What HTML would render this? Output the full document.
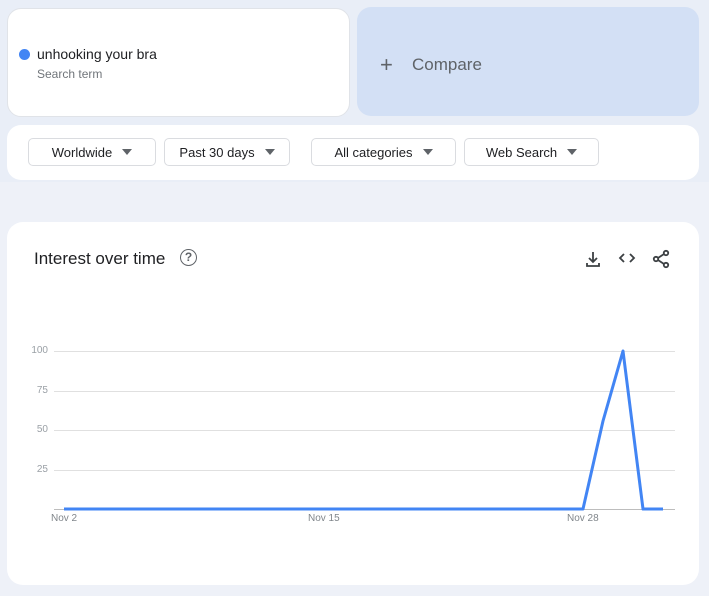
<!DOCTYPE html><html><head><style>
body{margin:0;width:709px;height:596px;background:#eef1f8;font-family:"Liberation Sans",sans-serif;position:relative;overflow:hidden}
.top{position:absolute;left:0;top:0;width:709px;height:182px;background:#e9eef7}
.card{position:absolute;background:#fff;border-radius:14px}
.chip{position:absolute;top:138px;height:28px;border:1px solid #dadce0;border-radius:5px;background:#fff;font-size:13px;color:#202124;line-height:28px;box-sizing:border-box;text-align:center}
.chip:after{content:"";display:inline-block;margin-left:10px;border-left:5px solid transparent;border-right:5px solid transparent;border-top:6px solid #5f6368;vertical-align:2px}
.yl{position:absolute;font-size:10px;color:#9aa0a6;text-align:right;width:30px;left:18px}
.xl{position:absolute;font-size:10px;color:#80868b;top:513px}
</style></head><body>
<div class="top"></div>
<div class="card" style="left:7px;top:8px;width:343px;height:109px;border:1px solid #e0e3e8;box-sizing:border-box"></div>
<div style="position:absolute;left:19px;top:49px;width:11px;height:11px;border-radius:50%;background:#4285f4"></div>
<div style="position:absolute;left:37px;top:46px;font-size:14px;color:#202124">unhooking your bra</div>
<div style="position:absolute;left:37px;top:67px;font-size:12px;color:#70757a">Search term</div>
<div style="position:absolute;left:357px;top:7px;width:342px;height:109px;border-radius:14px;background:#d3e0f5"></div>
<div style="position:absolute;left:380px;top:52px;font-size:22px;color:#5f6368;font-weight:300">+</div>
<div style="position:absolute;left:412px;top:55px;font-size:17px;color:#5f6368">Compare</div>
<div class="card" style="left:7px;top:125px;width:692px;height:55px"></div>
<div class="chip" style="left:28px;width:128px">Worldwide</div>
<div class="chip" style="left:164px;width:126px">Past 30 days</div>
<div class="chip" style="left:311px;width:145px">All categories</div>
<div class="chip" style="left:464px;width:135px">Web Search</div>
<div class="card" style="left:7px;top:222px;width:692px;height:363px;border-radius:16px"></div>
<div style="position:absolute;left:34px;top:249px;font-size:17px;color:#202124">Interest over time</div>
<div style="position:absolute;left:180px;top:249px;width:15px;height:15px;border:1.8px solid #5f6368;border-radius:50%;font-size:12px;line-height:15px;text-align:center;color:#5f6368;font-weight:bold">?</div>
<svg style="position:absolute;left:0;top:0" width="709" height="596">
<g stroke="#3c4043" stroke-width="1.8" fill="none">
<path d="M593 252v10M589 258l4 4 4-4M587 263v3h12v-3"/>
<path d="M624 254l-4 4 4 4M630 254l4 4-4 4"/>
<circle cx="666" cy="253" r="2.2"/><circle cx="656" cy="259" r="2.2"/><circle cx="666" cy="265" r="2.2"/>
<path d="M658 258l6-4M658 260l6 4"/>
</g>
<g stroke="#e0e0e0" stroke-width="1">
<path d="M54 351.5H675M54 391.5H675M54 430.5H675M54 470.5H675"/>
<path d="M54 509.5H675" stroke="#bdbdbd"/>
</g>
<polyline points="64,509 583,509 603,421 623,351 643,509 663,509" fill="none" stroke="#4285f4" stroke-width="3" stroke-linejoin="round"/>
</svg>
<div class="yl" style="top:345px">100</div>
<div class="yl" style="top:385px">75</div>
<div class="yl" style="top:424px">50</div>
<div class="yl" style="top:464px">25</div>
<div class="xl" style="left:51px">Nov 2</div>
<div class="xl" style="left:308px">Nov 15</div>
<div class="xl" style="left:567px">Nov 28</div>
</body></html>
